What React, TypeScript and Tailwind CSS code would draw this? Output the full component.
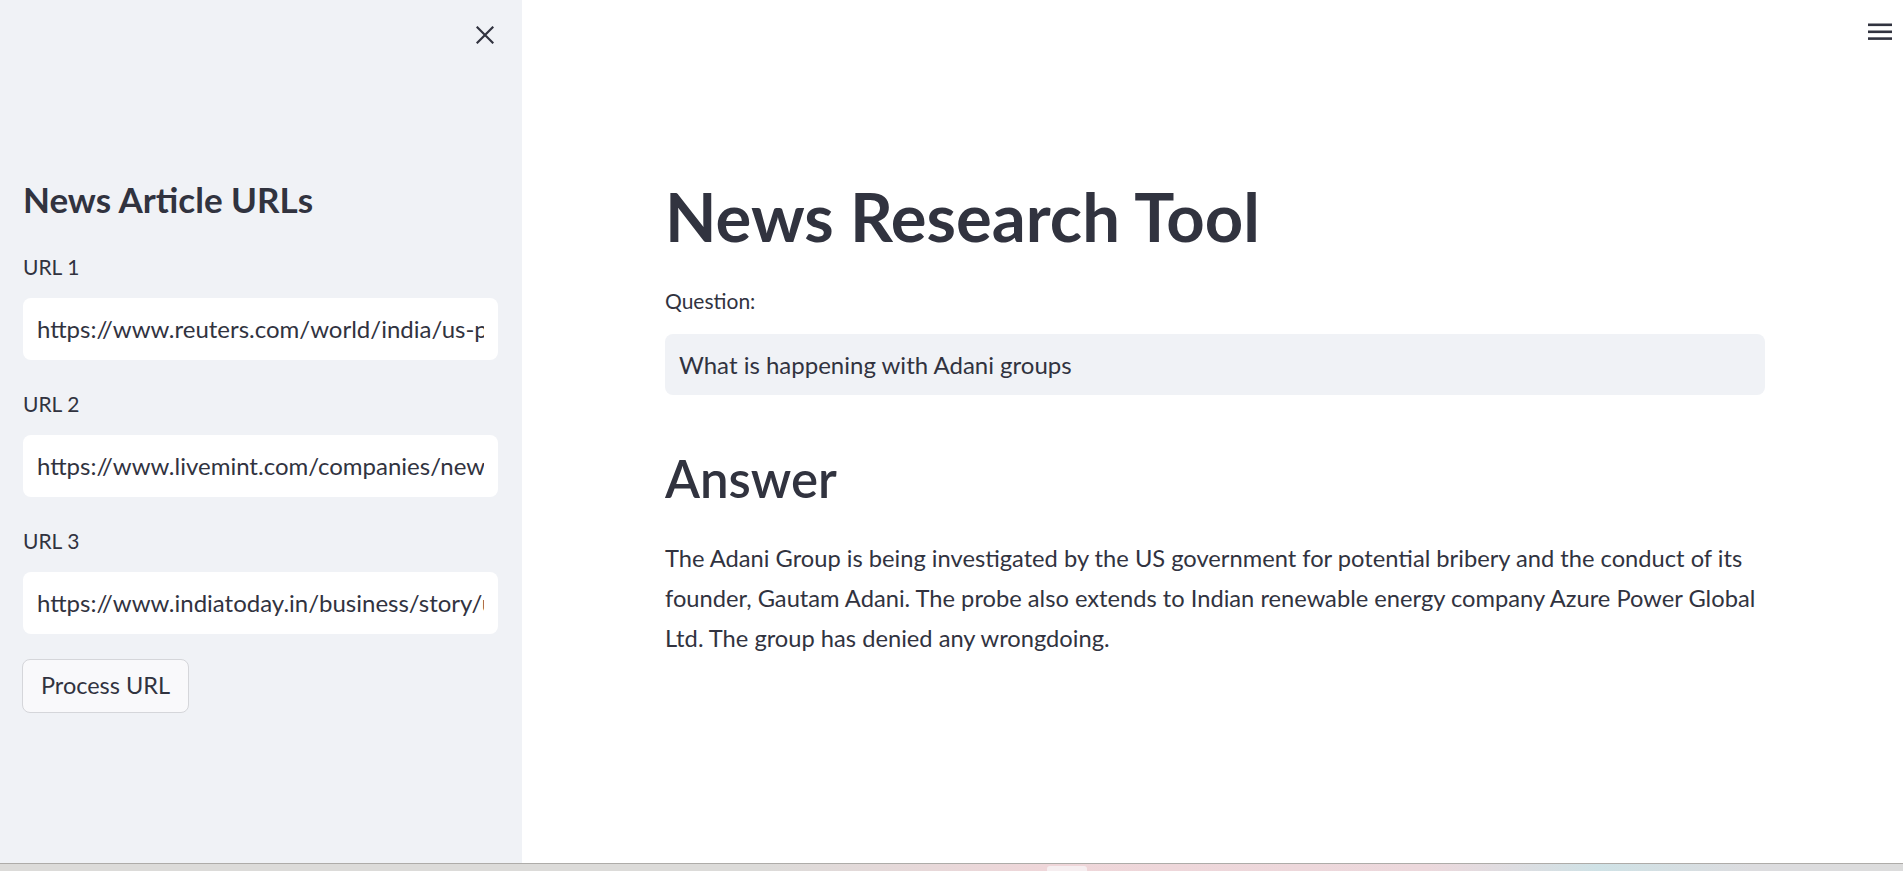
import React from "react";

const font = { fontFamily: "Lato, 'Noto Sans', sans-serif" };

function CloseIcon() {
  return (
    <svg width="18" height="18" viewBox="0 0 18 18" fill="none">
      <path d="M1.5 1.5L16.5 16.5M16.5 1.5L1.5 16.5" stroke="#31333f" strokeWidth="2.2" strokeLinecap="square" />
    </svg>
  );
}

function MenuIcon() {
  return (
    <svg width="24" height="18" viewBox="0 0 24 18" fill="none">
      <rect x="0" y="0.5" width="24" height="2.6" fill="#31333f" />
      <rect x="0" y="7.5" width="24" height="2.6" fill="#31333f" />
      <rect x="0" y="14.3" width="24" height="2.6" fill="#31333f" />
    </svg>
  );
}

function UrlField({ label, value, first }: { label: string; value: string; first?: boolean }) {
  return (
    <div className={first ? "flex flex-col" : "flex flex-col mt-[30px]"}>
      <div className="text-[21px] leading-[28px] text-[#31333f]">{label}</div>
      <div className="mt-[17px] h-[62px] w-[475px] rounded-[8px] bg-white flex items-center pl-[14px] pr-[14px] overflow-hidden">
        <div className="w-full overflow-hidden whitespace-nowrap text-[24px] text-[#31333f]">{value}</div>
      </div>
    </div>
  );
}

export default function App() {
  return (
    <div className="w-screen h-screen flex flex-col overflow-hidden bg-white text-[#31333f]" style={font}>
      <div className="flex flex-1 min-h-0">
        <aside className="w-[522px] shrink-0 bg-[#f0f2f6] flex flex-col px-[22px]">
          <div className="h-[70px] flex items-center justify-end pr-[6px]">
            <CloseIcon />
          </div>
          <h2 className="mt-[107px] ml-[1px] text-[35px] leading-[44px] font-bold text-[#31333f]">News Article URLs</h2>
          <div className="mt-[32px] ml-[1px]">
            <UrlField first label="URL 1" value="https://www.reuters.com/world/india/us-pr" />
            <UrlField label="URL 2" value="https://www.livemint.com/companies/news" />
            <UrlField label="URL 3" value="https://www.indiatoday.in/business/story/us" />
          </div>
          <div className="mt-[25px]">
            <button className="h-[54px] w-[167px] rounded-[8px] border border-[#d5d6da] bg-[#f9f9fb] text-[23.5px] text-[#31333f] flex items-center justify-center">
              Process URL
            </button>
          </div>
        </aside>
        <main className="flex-1 flex flex-col">
          <div className="h-[64px] flex items-center justify-end pr-[11px]">
            <MenuIcon />
          </div>
          <div className="w-[1100px] ml-[143px] flex flex-col">
            <h1 className="mt-[112px] text-[67px] leading-[80px] font-bold text-[#31333f]">News Research Tool</h1>
            <div className="mt-[31px] text-[21px] leading-[28px]">Question:</div>
            <div className="mt-[19px] h-[61px] rounded-[8px] bg-[#f0f2f6] flex items-center pl-[14px]">
              <span className="text-[24px]">What is happening with Adani groups</span>
            </div>
            <h2 className="mt-[54px] text-[51px] leading-[60px] font-semibold">Answer</h2>
            <div className="mt-[29px] text-[23.7px] leading-[40px]">
              <div className="whitespace-nowrap">The Adani Group is being investigated by the US government for potential bribery and the conduct of its</div>
              <div className="whitespace-nowrap">founder, Gautam Adani. The probe also extends to Indian renewable energy company Azure Power Global</div>
              <div className="whitespace-nowrap">Ltd. The group has denied any wrongdoing.</div>
            </div>
          </div>
        </main>
      </div>
      <div className="h-[8px] shrink-0 border-t border-[#aeaca9] bg-[linear-gradient(90deg,#dcdbd9_0%,#dcdbd9_40%,#efd6d9_55%,#ecd8dc_75%,#cfe2e6_84%,#dcdcdf_92%,#dcdcdc_100%)] flex">
        <div className="ml-[1047px] mt-[2px] w-[40px] h-[6px] rounded-t-[3px] bg-[#f6eef0]" />
      </div>
    </div>
  );
}
